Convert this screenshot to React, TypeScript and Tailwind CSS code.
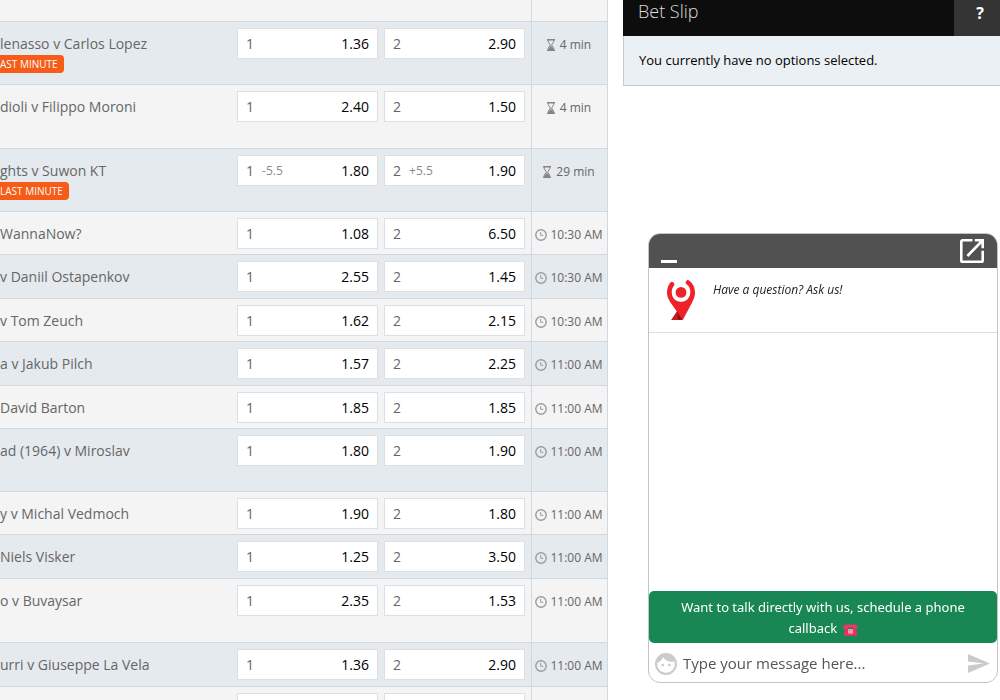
import { useState } from 'react'
import { clsx } from 'clsx'

// ─── Types ────────────────────────────────────────────────────────────────────
interface Match {
  id: number
  name: string
  odds: [string, string]
  handicap?: [string, string]
  time: string
  soon?: boolean
  badge?: string
  tall?: boolean
}

// ─── Data ─────────────────────────────────────────────────────────────────────
const MATCHES: Match[] = [
  { id: 1, name: 'lenasso v Carlos Lopez', odds: ['1.36', '2.90'], time: '4 min', soon: true, badge: 'AST MINUTE', tall: true },
  { id: 2, name: 'dioli v Filippo Moroni', odds: ['2.40', '1.50'], time: '4 min', soon: true, tall: true },
  { id: 3, name: 'ghts v Suwon KT', odds: ['1.80', '1.90'], handicap: ['-5.5', '+5.5'], time: '29 min', soon: true, badge: 'LAST MINUTE', tall: true },
  { id: 4, name: 'WannaNow?', odds: ['1.08', '6.50'], time: '10:30 AM' },
  { id: 5, name: 'v Daniil Ostapenkov', odds: ['2.55', '1.45'], time: '10:30 AM' },
  { id: 6, name: 'v Tom Zeuch', odds: ['1.62', '2.15'], time: '10:30 AM' },
  { id: 7, name: 'a v Jakub Pilch', odds: ['1.57', '2.25'], time: '11:00 AM' },
  { id: 8, name: 'David Barton', odds: ['1.85', '1.85'], time: '11:00 AM' },
  { id: 9, name: 'ad (1964) v Miroslav', odds: ['1.80', '1.90'], time: '11:00 AM', tall: true },
  { id: 10, name: 'y v Michal Vedmoch', odds: ['1.90', '1.80'], time: '11:00 AM' },
  { id: 11, name: 'Niels Visker', odds: ['1.25', '3.50'], time: '11:00 AM' },
  { id: 12, name: 'o v Buvaysar', odds: ['2.35', '1.53'], time: '11:00 AM', tall: true },
  { id: 13, name: 'urri v Giuseppe La Vela', odds: ['1.36', '2.90'], time: '11:00 AM' },
  { id: 14, name: '', odds: ['', ''], time: '' },
]

// ─── Icons ────────────────────────────────────────────────────────────────────
function HourglassIcon() {
  return (
    <svg className="w-2 h-3 shrink-0" viewBox="0 0 8 12" fill="none" stroke="#858585">
      <path d="M0 .7h8M0 11.3h8" strokeWidth="1.4" />
      <path d="M1.3 1v1.8L3.4 6 1.3 9.2V11M6.7 1v1.8L4.6 6l2.1 3.2V11" />
      <path d="M4 6.8 6.4 9.4V11H1.6V9.4z" fill="#858585" stroke="none" />
    </svg>
  )
}

function ClockIcon() {
  return (
    <svg className="w-3 h-3 shrink-0" viewBox="0 0 12 12" fill="none" stroke="#9b9b9b">
      <circle cx="6" cy="6" r="5.2" strokeWidth="1.4" />
      <path d="M5.7 3v3.3h2.6" />
    </svg>
  )
}

function PopOutIcon() {
  return (
    <svg className="w-6 h-6" viewBox="0 0 24 24" fill="none" stroke="#fff" strokeWidth="2.6">
      <path d="M12.5 1.3H2.6a1.3 1.3 0 0 0-1.3 1.3v18.8a1.3 1.3 0 0 0 1.3 1.3h18.8a1.3 1.3 0 0 0 1.3-1.3v-9.6" />
      <path d="M14.8 1.3h7.9v8M22 2 7.4 17" />
    </svg>
  )
}

function PinLogo() {
  return (
    <svg className="w-7 h-10 shrink-0" viewBox="0 0 28 40">
      <path
        d="M5 4.3Q2.3 7.7 2.3 12.7M21 2.5Q25.7 6 25.7 12.7"
        fill="none"
        stroke="#ee2329"
        strokeWidth="4.6"
        strokeLinecap="round"
      />
      <path
        d="M0 12.5h4.6a9.4 9.4 0 0 0 18.8 0H28c0 4.2-1.6 7.3-3.4 10.9L15.8 40H4.3l5.6-8.6-6.6-9.1C1.2 19 0 16 0 12.5z"
        fill="#ee2329"
      />
      <circle cx="14" cy="12.4" r="5.4" fill="#ee2329" />
      <path d="M4.3 40l5.6-8.6 2 8.6z" fill="#c71d22" />
      <path d="m9.9 31.4 5.4 8.1-4.3.5z" fill="#8e1218" />
    </svg>
  )
}

function PhoneIcon() {
  return (
    <svg className="inline-block w-[15px] h-3 ml-0.5" viewBox="0 0 15 12">
      <path d="M2.6 5h9.8l1.8 5.5q.3 1.3-1 1.3H1.8q-1.3 0-1-1.3z" fill="#ef2f62" />
      <path d="M.3 4.3Q.2.4 3.5.4h8q3.3 0 3.2 3.9-.1.9-1 .9h-2.5q-.8 0-.8-1V3.5H4.6v.7q0 1-.8 1H1.3q-.9 0-1-.9z" fill="#f8316a" />
      <path d="M5.2 5.2h4.6v4.4H5.2z" fill="#ffc3d3" />
      <path d="M5.2 6.7h4.6M5.2 8.2h4.6M6.7 5.2v4.4M8.3 5.2v4.4" stroke="#ef6d92" strokeWidth=".5" />
    </svg>
  )
}

function FaceIcon() {
  return (
    <svg className="w-[22px] h-[22px]" viewBox="2 2 20 20" fill="#cbcbcb">
      <path d="M9 11.75a1.25 1.25 0 1 0 0 2.5 1.25 1.25 0 0 0 0-2.5zm6 0a1.25 1.25 0 1 0 0 2.5 1.25 1.25 0 0 0 0-2.5zM12 2a10 10 0 1 0 0 20 10 10 0 0 0 0-20zm0 18c-4.41 0-8-3.59-8-8 0-.29.02-.58.05-.86 2.36-1.05 4.23-2.98 5.21-5.37A9.974 9.974 0 0 0 17.42 10c.78 0 1.53-.09 2.25-.26.21.71.33 1.47.33 2.26 0 4.41-3.59 8-8 8z" />
    </svg>
  )
}

function SendIcon() {
  return (
    <svg className="w-[22px] h-[19px]" viewBox="2 3 21 18" fill="#cbcbcb">
      <path d="M2.01 21 23 12 2.01 3 2 10l15 2-15 2z" />
    </svg>
  )
}

// ─── Odds table ───────────────────────────────────────────────────────────────
function OddsButton({ pick, handicap, price }: { pick: string; handicap?: string; price: string }) {
  return (
    <button
      type="button"
      className="flex items-center w-[141px] h-[31px] px-2 bg-white border border-[#d9e0e6] text-sm text-[#666] hover:bg-gray-50"
    >
      {price && <span>{pick}</span>}
      {handicap && <span className="ml-2 text-xs text-[#8a8a8a]">{handicap}</span>}
      <span className="ml-auto text-black">{price}</span>
    </button>
  )
}

function MatchRow({ match, shaded }: { match: Match; shaded: boolean }) {
  return (
    <tr
      className={clsx(
        'align-top [&>td]:border-t [&>td]:border-[#d0d8e0]',
        shaded ? 'bg-[#e5eaef]' : 'bg-[#f4f4f4]',
        match.tall && (shaded ? 'h-[63px]' : 'h-[64px]'),
        !match.tall && (shaded ? 'h-[44px]' : 'h-[43px]')
      )}
    >
      <td className="p-0 whitespace-nowrap text-sm leading-[18px] text-[#666]">
        <div className="pt-[13px]">{match.name}</div>
        {match.badge && (
          <span className="inline-block h-[18px] pr-1.5 rounded-r-sm bg-[#f65b17] text-[10px] leading-[19px] text-white align-top mt-0.5">
            {match.badge}
          </span>
        )}
      </td>
      <td className="p-0 pt-1.5">
        <div className="flex gap-1.5">
          <OddsButton pick="1" handicap={match.handicap?.[0]} price={match.odds[0]} />
          <OddsButton pick="2" handicap={match.handicap?.[1]} price={match.odds[1]} />
        </div>
      </td>
      <td className="p-0 pr-px border-x border-[#d0d8e0] text-xs text-[#666]">
        {match.time && (
          <div className={clsx('flex items-center justify-center pt-[15px] whitespace-nowrap', match.soon ? 'gap-[5px]' : 'gap-[3px]')}>
            {match.soon ? <HourglassIcon /> : <ClockIcon />}
            {match.time}
          </div>
        )}
      </td>
    </tr>
  )
}

function MatchTable() {
  return (
    <table className="w-full table-fixed border-separate border-spacing-0" aria-label="Matches">
      <colgroup>
        <col />
        <col className="w-[294px]" />
        <col className="w-[77px]" />
      </colgroup>
      <tbody>
        <tr className="h-[21px] bg-[#f4f4f4]">
          <td />
          <td />
          <td className="border-x border-[#d0d8e0]" />
        </tr>
        {MATCHES.map((match, i) => (
          <MatchRow key={match.id} match={match} shaded={i % 2 === 0} />
        ))}
      </tbody>
    </table>
  )
}

// ─── Bet slip ─────────────────────────────────────────────────────────────────
function BetSlip() {
  return (
    <aside className="w-[377px] shrink-0">
      <header className="flex h-9 bg-[#0d0d0d] text-white">
        <h2 className="flex-1 pl-[15px] text-lg leading-[22px] font-light text-[#ddd]">Bet Slip</h2>
        <button type="button" aria-label="Help" className="w-[46px] pl-1.5 pb-2.5 bg-[#343434] text-base font-bold">
          ?
        </button>
      </header>
      <p className="h-[50px] pl-[15px] border-l border-b border-[#c6cacd] bg-[#ebf0f4] text-[13px] leading-[49px] text-black">
        You currently have no options selected.
      </p>
    </aside>
  )
}

// ─── Chat widget ──────────────────────────────────────────────────────────────
function ChatWidget() {
  const [message, setMessage] = useState('')

  return (
    <section className="fixed right-0.5 bottom-[17px] flex flex-col w-[350px] h-[450px] rounded-xl border border-[#c4c4c4] bg-white overflow-hidden">
      <header className="flex items-center justify-between h-[34px] shrink-0 pl-3 pr-[13px] bg-[#515151]">
        <button type="button" aria-label="Minimize" className="flex items-end w-4 h-6">
          <span className="w-full h-[3px] bg-white" />
        </button>
        <button type="button" aria-label="Open in new window">
          <PopOutIcon />
        </button>
      </header>

      <div className="flex gap-[18px] h-[65px] shrink-0 pl-[18px] pt-3 border-b border-[#dedede]">
        <PinLogo />
        <p className="text-xs leading-5 italic text-[#222]">Have a question? Ask us!</p>
      </div>

      <div className="flex-1" />

      <a
        href="#callback"
        className="block px-6 pt-1.5 pb-1 rounded-[5px] bg-[#198754] text-center font-['Noto_Sans',sans-serif] text-[13px] leading-[21px] text-white"
      >
        Want to talk directly with us, schedule a phone callback <PhoneIcon />
      </a>

      <form
        className="flex items-center h-[39px] shrink-0 pl-1.5 pr-[7px] pt-0.5 gap-1.5"
        onSubmit={(e) => e.preventDefault()}
      >
        <button type="button" aria-label="Emoji">
          <FaceIcon />
        </button>
        <input
          type="text"
          aria-label="Message"
          placeholder="Type your message here..."
          value={message}
          onChange={(e) => setMessage(e.target.value)}
          className="flex-1 min-w-0 text-[15px] text-[#555] placeholder:text-[#555] outline-none"
        />
        <button type="submit" aria-label="Send">
          <SendIcon />
        </button>
      </form>
    </section>
  )
}

// ─── Page ─────────────────────────────────────────────────────────────────────
export default function App() {
  return (
    <div className="flex gap-[15px] h-screen overflow-hidden bg-white font-['Open_Sans','Noto_Sans',sans-serif]">
      <main className="flex-1 min-w-0">
        <MatchTable />
      </main>
      <BetSlip />
      <ChatWidget />
    </div>
  )
}
